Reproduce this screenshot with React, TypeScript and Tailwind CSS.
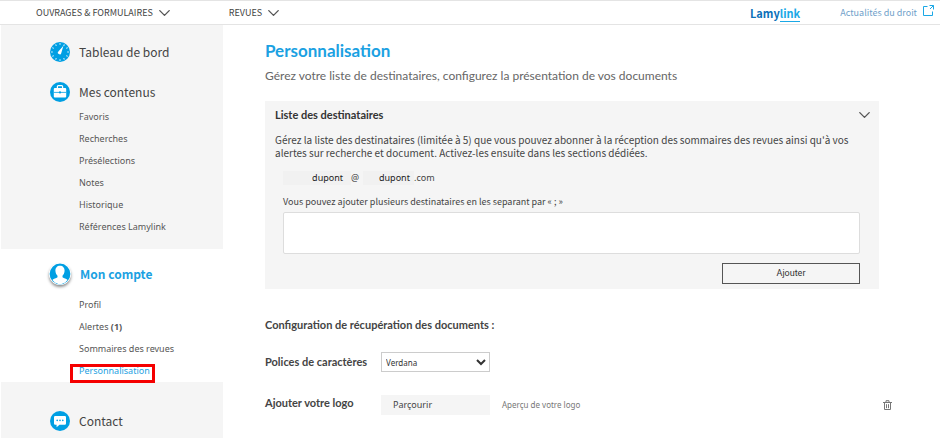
import { ChevronDown } from "lucide-react";

type NavItem = {
  label: string;
  count?: number;
  active?: boolean;
};

const contentItems: NavItem[] = [
  { label: "Favoris" },
  { label: "Recherches" },
  { label: "Présélections" },
  { label: "Notes" },
  { label: "Historique" },
  { label: "Références Lamylink" },
];

const accountItems: NavItem[] = [
  { label: "Profil" },
  { label: "Alertes", count: 1 },
  { label: "Sommaires des revues" },
  { label: "Personnalisation", active: true },
];

const ticks = [0, 30, 60, 90, 120, 150, 180, 210, 240, 270, 300, 330];

function GaugeIcon() {
  return (
    <svg viewBox="0 0 20 20" className="size-5 shrink-0" aria-hidden="true">
      <circle cx="10" cy="10" r="10" fill="#009fe3" />
      {ticks.map((angle) => (
        <path key={angle} d="M10 1.2v1.5" stroke="#fff" strokeWidth="1" transform={`rotate(${angle} 10 10)`} />
      ))}
      <path d="M13.4 3.8 8.4 9.4a1.7 1.7 0 1 0 2.9 1.5z" fill="#fff" />
    </svg>
  );
}

function BriefcaseIcon() {
  return (
    <svg viewBox="0 0 20 20" className="size-5 shrink-0" aria-hidden="true">
      <circle cx="10" cy="10" r="10" fill="#009fe3" />
      <path d="M7.4 6V4.6q0-.9.9-.9h3.4q.9 0 .9.9V6" fill="none" stroke="#fff" strokeWidth="1.2" />
      <rect x="3.8" y="6" width="12.4" height="9.6" rx="1" fill="#fff" />
      <path d="M3.8 10.4h12.4" stroke="#009fe3" strokeWidth=".8" />
      <circle cx="10" cy="10.4" r="1.1" fill="#009fe3" />
    </svg>
  );
}

function UserIcon() {
  return (
    <svg viewBox="0 0 22 22" className="size-[22px] shrink-0 rounded-full shadow-[0_2px_3px_rgba(0,0,0,0.45)]" aria-hidden="true">
      <circle cx="11" cy="11" r="11" fill="#fff" />
      <circle cx="11" cy="11" r="10.4" fill="#009fe3" />
      <path
        d="M11 2.8c2.9 0 4.7 2.1 4.6 5-.1 2.3-1 3.9-2.1 5v1.5c1.5 1 3.7 1.3 5 2.8A10.4 10.4 0 0 1 11 21.4a10.4 10.4 0 0 1-7.5-4.3c1.3-1.5 3.5-1.8 5-2.8v-1.5c-1.1-1.1-2-2.7-2.1-5-.1-2.9 1.7-5 4.6-5z"
        fill="#fff"
      />
    </svg>
  );
}

function ChatIcon() {
  return (
    <svg viewBox="0 0 20 20" className="size-5 shrink-0" aria-hidden="true">
      <circle cx="10" cy="10" r="10" fill="#009fe3" />
      <path d="M5.2 5h9.6q1.2 0 1.2 1.2v6.3q0 1.2-1.2 1.2H9.5L6.6 16.3v-2.6H5.2Q4 13.7 4 12.5V6.2Q4 5 5.2 5z" fill="#fff" />
      <circle cx="7.2" cy="9.4" r=".8" fill="#009fe3" />
      <circle cx="10" cy="9.4" r=".8" fill="#009fe3" />
      <circle cx="12.8" cy="9.4" r=".8" fill="#009fe3" />
    </svg>
  );
}

function ExternalIcon() {
  return (
    <svg viewBox="0 0 11 11" className="mb-1 size-[11px] shrink-0" fill="none" stroke="#1ba8e6" aria-hidden="true">
      <path d="M4.5 1.5H.5v9h9v-4M6.5.5h4v4M10.5.5 7 4" />
    </svg>
  );
}

function ChevronIcon() {
  return <ChevronDown viewBox="5 7 14 10" className="h-2 w-[11px] text-[#555]" strokeWidth={1.7} />;
}

function TrashIcon() {
  return (
    <svg viewBox="0 0 9 10" className="h-2.5 w-[9px]" fill="none" stroke="#777" aria-hidden="true">
      <path d="M0 2.5h9M3 2V.7h3V2M1.5 3v6.5h6V3M3.5 4.2v4M5.5 4.2v4" />
    </svg>
  );
}

function NavList({ items }: { items: NavItem[] }) {
  return (
    <ul className="pl-[78px] font-['Noto_Sans',sans-serif] text-[9px] leading-[22px] text-[#555]">
      {items.map((item) => (
        <li key={item.label} className="relative">
          <a href="#" className={item.active ? "text-[#1ba1e2]" : ""}>
            {item.label} {item.count && <b>({item.count})</b>}
          </a>
          {item.active && (
            <span className="pointer-events-none absolute top-1 -left-[9px] h-[19px] w-[85px] border-3 border-[#f50000]" />
          )}
        </li>
      ))}
    </ul>
  );
}

export default function App() {
  return (
    <div className="min-h-screen bg-white font-['Noto_Sans_CJK_SC',sans-serif] text-[#444]">
      <header className="flex h-[25px] items-center border-t border-b border-[#e4e4e4] pl-9 text-[9px]">
        <nav className="flex flex-1 items-center gap-[59px]">
          <button type="button" className="flex items-center gap-1.5">
            OUVRAGES &amp; FORMULAIRES
            <ChevronIcon />
          </button>
          <button type="button" className="flex items-center gap-1.5">
            REVUES
            <ChevronIcon />
          </button>
        </nav>
        <a href="#" className="mr-10 text-[11px] leading-3 font-bold text-[#0a70b8]">
          Lamy<span className="border-b border-[#1ba8e6] text-[#1ba8e6]">link</span>
        </a>
        <a href="#" className="mr-1.5 flex items-center gap-1.5 text-[#6f9fca]">
          Actualités du droit
          <ExternalIcon />
        </a>
      </header>

      <div className="flex">
        <aside className="ml-px w-[222px] shrink-0">
          <section className="bg-[#f5f5f5] pt-[17px] pb-[11px]">
            <a href="#" className="flex h-5 items-center gap-[9px] pl-[49px] text-[12px]">
              <GaugeIcon />
              Tableau de bord
            </a>
            <a href="#" className="mt-5 mb-1 flex h-5 items-center gap-[9px] pl-[49px] text-[12px]">
              <BriefcaseIcon />
              Mes contenus
            </a>
            <NavList items={contentItems} />
          </section>
          <section className="pt-[14px]">
            <a href="#" className="mb-[9px] flex h-[22px] items-center gap-[9px] pl-12 text-[12px] font-bold text-[#1ba1e2]">
              <UserIcon />
              Mon compte
            </a>
            <NavList items={accountItems} />
          </section>
          <section className="bg-[#f5f5f5] pt-[29px] pb-2">
            <a href="#" className="flex h-5 items-center gap-[9px] pl-[49px] text-[12px]">
              <ChatIcon />
              Contact
            </a>
          </section>
        </aside>

        <main className="min-w-0 flex-1 pt-4 pr-12 pl-[42px]">
          <h1 className="font-['Lato',sans-serif] text-[17px] leading-5 font-bold text-[#1ba1e2]">Personnalisation</h1>
          <p className="mt-1.5 font-['Lato',sans-serif] text-[12px] leading-[18px] text-[#666]">
            Gérez votre liste de destinataires, configurez la présentation de vos documents
          </p>

          <section className="mt-4 mr-[13px] bg-[#f5f5f5] pt-1 pr-[19px] pb-[5px] pl-[10px]">
            <div className="-mr-2.5 flex h-5 items-center justify-between">
              <h2 className="font-['Lato',sans-serif] text-[11px] font-bold text-[#333]">Liste des destinataires</h2>
              <button type="button" aria-label="Replier la liste">
                <ChevronIcon />
              </button>
            </div>
            <p className="mt-2 text-[10px] leading-[13px]">
              Gérez la liste des destinataires (limitée à 5) que vous pouvez abonner à la réception des sommaires des revues ainsi qu'à vos alertes sur recherche et document. Activez-les ensuite dans les sections dédiées.
            </p>
            <div className="pl-2">
              <div className="mt-3 flex h-3.5 items-center font-['Noto_Sans',sans-serif] text-[9px]">
                <span className="w-[68px] bg-[#f1f1f1] pr-2 text-right text-[#222]">dupont</span>
                <span className="w-3">@</span>
                <span className="w-[51px] bg-[#f1f1f1] pl-4 text-[#222]">dupont</span>
                <span>.com</span>
              </div>
              <label htmlFor="recipients" className="mt-[9px] block text-[9px] leading-4">
                Vous pouvez ajouter plusieurs destinataires en les separant par « ; »
              </label>
              <textarea
                id="recipients"
                className="mt-0.5 block h-[42px] w-full resize-none rounded-xs border border-[#ddd] bg-white px-2 text-[10px]"
              />
              <button
                type="button"
                className="mt-[9px] ml-auto block h-[21px] w-[138px] border border-[#555] font-['Roboto',sans-serif] text-[9px] text-[#333]"
              >
                Ajouter
              </button>
            </div>
          </section>

          <div className="font-['Lato',sans-serif] text-[11px]">
            <h2 className="mt-7 leading-4 font-bold">Configuration de récupération des documents :</h2>
            <div className="mt-[19px] flex h-5 items-center">
              <label htmlFor="font" className="w-[116px] font-bold">Polices de caractères</label>
              <select id="font" className="h-5 w-[109px] border border-[#ccc] bg-white font-['Noto_Sans',sans-serif] text-[8px] text-[#333]">
                <option>Verdana</option>
                <option>Arial</option>
              </select>
            </div>
            <div className="mt-[23px] flex h-5 items-center">
              <span className="w-[116px] self-start leading-4 font-bold">Ajouter votre logo</span>
              <button type="button" className="h-5 w-[109px] bg-[#f5f5f5] pl-3 text-left font-['Noto_Sans',sans-serif] text-[9px]">
                Parçourir
              </button>
              <span className="ml-3 flex-1 font-['Noto_Sans',sans-serif] text-[8px] text-[#777]">Aperçu de votre logo</span>
              <button type="button" aria-label="Supprimer le logo">
                <TrashIcon />
              </button>
            </div>
          </div>
        </main>
      </div>
    </div>
  );
}
